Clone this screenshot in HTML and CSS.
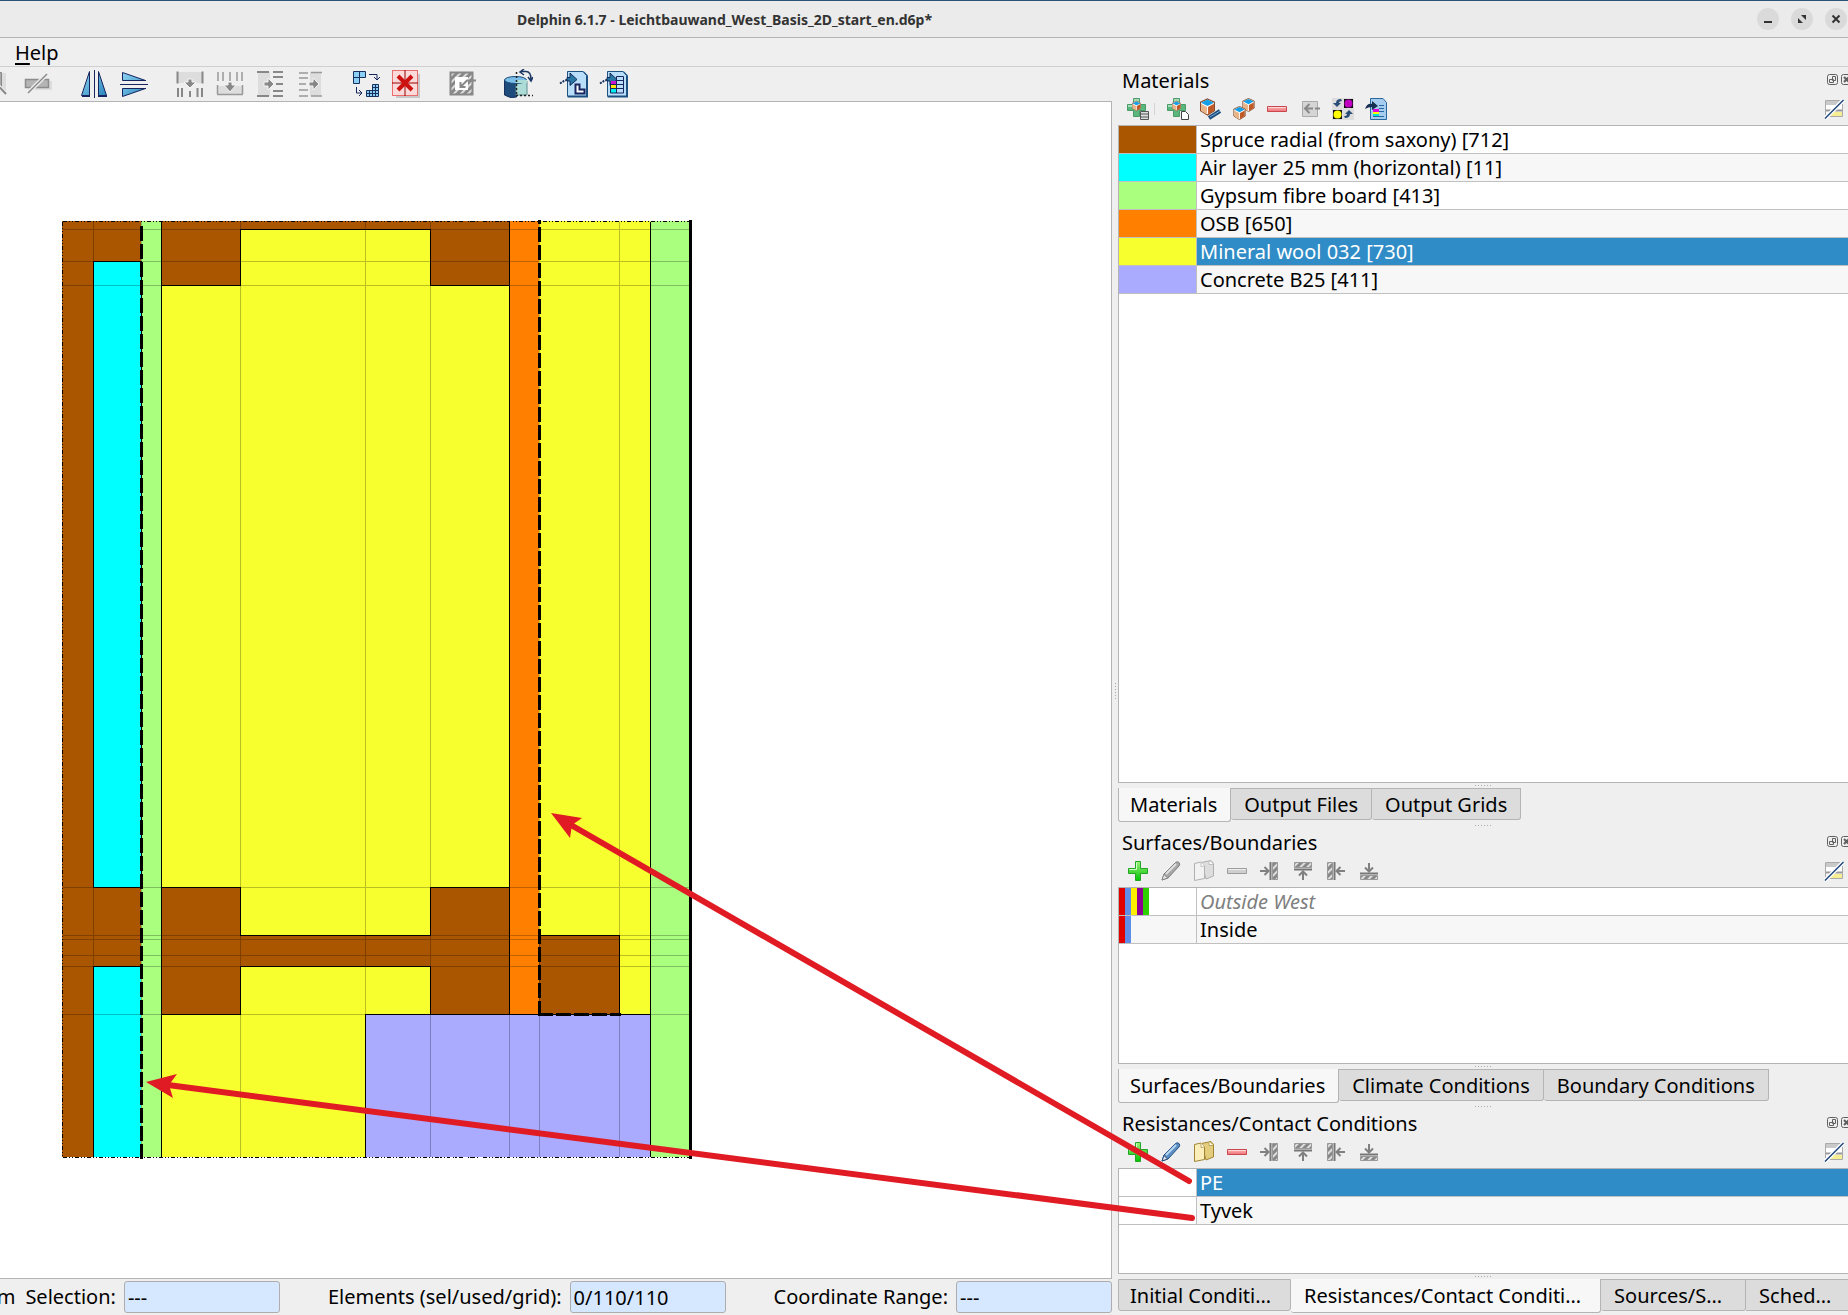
FILE: index.html
```html
<!DOCTYPE html>
<html lang="en">
<head>
<meta charset="utf-8">
<title>Delphin 6.1.7</title>
<link rel="stylesheet" href="styles.css">
</head>
<body>
<svg class="defs" aria-hidden="true">
  <defs>
    <linearGradient id="gBlue" x1="0" y1="0" x2="1" y2="1"><stop offset="0" stop-color="#8fd4f2"/><stop offset="1" stop-color="#2a86bd"/></linearGradient>
    <linearGradient id="gGreen" x1="0" y1="0" x2="0" y2="1"><stop offset="0" stop-color="#9cf07c"/><stop offset="1" stop-color="#00c400"/></linearGradient>
    <linearGradient id="gRed" x1="0" y1="0" x2="0" y2="1"><stop offset="0" stop-color="#ffb9b9"/><stop offset="1" stop-color="#ee7076"/></linearGradient>
    <pattern id="hatch" width="5" height="5" patternUnits="userSpaceOnUse" patternTransform="rotate(45)"><rect width="5" height="5" fill="#888"/><rect width="2" height="5" fill="#ddd"/></pattern>
    <symbol id="cube" viewBox="0 0 14 16">
      <path d="M7 .5 13.500 3.500V11.500L7 15.500.5 11.500V3.500z" fill="#fff" stroke="#8a4a2a"/>
      <path d="M7 1 13 4 7 7 1 4z" fill="#159fe8"/><path d="M1 5 6.500 8V15L1 11.500z" fill="#e8b488"/><path d="M13 5 7.500 8V15L13 11.500z" fill="#bf5a26"/>
    </symbol>
    <symbol id="gplus" viewBox="0 0 22 22"><path d="M6.500.5h6v6h6v6h-6v6h-6v-6h-6v-6h6z" fill="#59b77d" stroke="#4b9b69"/><path d="M7 1h5v3H7zM1 7h5v2H1z" fill="#a8dcb9"/></symbol>
    <symbol id="plus" viewBox="0 0 22 22"><path d="M8.500 1.500h5v7h7v5h-7v7h-5v-7h-7v-5h7z" fill="url(#gGreen)" stroke="#22a522"/><path d="M9.500 9.500v-7M2.500 9.500h7" stroke="#d4ffc4" fill="none"/></symbol>
    <symbol id="minus" viewBox="0 0 22 22"><path d="M1.500 8.500h19v5h-19z" fill="url(#gRed)" stroke="#c8474f"/><path d="M2 9.500h18" stroke="#ffd6d6"/></symbol>
    <symbol id="minusoff" viewBox="0 0 22 22"><path d="M1.500 8.500h19v5h-19z" fill="#cfcfcf" stroke="#9c9c9c"/><path d="M2 9.500h18" stroke="#eee"/></symbol>
    <symbol id="pencil" viewBox="0 0 22 22"><path d="M2 20 4 14 15.500 2.500q2-1.500 3.500 0t0 3.500L8 18z" fill="#5b8fc4" stroke="#244f80"/><path d="M6 14 16 4" stroke="#b7d6f2" stroke-width="2"/><path d="M2 20 4 14.500 7.500 18z" fill="#e8e8e8" stroke="#244f80"/></symbol>
    <symbol id="penciloff" viewBox="0 0 22 22"><path d="M2 20 4 14 15.500 2.500q2-1.500 3.500 0t0 3.500L8 18z" fill="#a8a8a8" stroke="#7d7d7d"/><path d="M6 14 16 4" stroke="#e0e0e0" stroke-width="2"/><path d="M2 20 4 14.500 7.500 18z" fill="#eee" stroke="#888"/></symbol>
    <symbol id="copy" viewBox="0 0 22 22"><path d="M8.500 2.500 18 .5l2.500 3V16L13 19z" fill="#e3cd7c" stroke="#a18432"/><path d="M1.500 3.500 8 2l3.500 4v12.500l-10 2z" fill="#fbeebb" stroke="#a18432"/><path d="M8 2v4.500l3.500-.5M16 1v3.500h4" fill="#fff" stroke="#bda55a"/></symbol>
    <symbol id="copyoff" viewBox="0 0 22 22"><path d="M8.500 2.500 18 .5l2.500 3V16L13 19z" fill="#ddd" stroke="#b0b0b0"/><path d="M1.500 3.500 8 2l3.500 4v12.500l-10 2z" fill="#f2f2f2" stroke="#b0b0b0"/><path d="M8 2v4.500l3.500-.5M16 1v3.500h4" fill="#fff" stroke="#c0c0c0"/></symbol>
    <symbol id="aright" viewBox="0 0 22 22"><path d="M1 11h8M5.500 7 9.500 11 5.500 15" fill="none" stroke="#808080" stroke-width="2"/><path d="M11.500 2v18" stroke="#777" stroke-width="2"/><path d="M13.500 2.500h5v17h-5z" fill="url(#hatch)" stroke="#999"/></symbol>
    <symbol id="aup" viewBox="0 0 22 22"><path d="M11 20v-8M7 15.500 11 11.500 15 15.500" fill="none" stroke="#808080" stroke-width="2"/><path d="M2 9.500h18" stroke="#777" stroke-width="2"/><path d="M2.500 2.500h17v5h-17z" fill="url(#hatch)" stroke="#999"/></symbol>
    <symbol id="aleft" viewBox="0 0 22 22"><path d="M20 11h-8M15.500 7 11.500 11 15.500 15" fill="none" stroke="#808080" stroke-width="2"/><path d="M9.500 2v18" stroke="#777" stroke-width="2"/><path d="M2.500 2.500h5v17h-5z" fill="url(#hatch)" stroke="#999"/></symbol>
    <symbol id="adown" viewBox="0 0 22 22"><path d="M11 3v8M7 7.500 11 11.500 15 7.500" fill="none" stroke="#808080" stroke-width="2"/><path d="M2 13.500h18" stroke="#777" stroke-width="2"/><path d="M2.500 15.500h17v4h-17z" fill="url(#hatch)" stroke="#999"/></symbol>
    <symbol id="tableoff" viewBox="0 0 22 22"><path d="M2.500 2.500h17v16h-17z" fill="#fff" stroke="#aaa"/><path d="M3 3h16v4H3z" fill="#c9c9c9"/><path d="M3 12.500h16" stroke="#999" stroke-width="2"/><path d="M8 14h11v4H5z" fill="#f5ee92"/><path d="M2 20.500 20.500 2" stroke="#fff" stroke-width="4"/><path d="M2 20.500 20.500 2" stroke="#1d4478" stroke-width="1.500"/></symbol>
    <symbol id="float" viewBox="0 0 12 12"><rect x=".5" y=".5" width="10" height="10" rx="2" fill="none" stroke="#606060"/><path d="M5.500 2.500h3v4h-3zM2.500 5.500h4v3h-4z" fill="#eee" stroke="#606060"/></symbol>
    <symbol id="close" viewBox="0 0 12 12"><rect x=".5" y=".5" width="10" height="10" rx="2" fill="none" stroke="#606060"/><path d="M3 3l5 5M8 3 3 8" stroke="#606060" stroke-width="2"/></symbol>
    <symbol id="import" viewBox="0 0 30 28"><path d="M10 1.500h15l4 4v22H8.500V1.500z" fill="#1c4f82"/><path d="M8.500 1.500H24l3.500 4V26h-19z" fill="#b9defa" stroke="#1c5180"/><path d="M1 13.500 5 11l4-1.500" stroke="#17305e" stroke-width="2" stroke-dasharray="2 1" fill="none"/><path d="M8 7.500h3V3l7 6.500-7 6V11H8z" fill="#2878a6" stroke="#152b5b"/></symbol>
  </defs>
</svg>

<div class="window">
  <header class="titlebar">
    <h1>Delphin 6.1.7 - Leichtbauwand_West_Basis_2D_start_en.d6p*</h1>
    <div class="controls">
      <button aria-label="Minimize"><svg width="22" height="22"><path d="M7 14h8" stroke="#333" stroke-width="2"/></svg></button>
      <button aria-label="Restore"><svg width="22" height="22"><path d="M10 7h5v5zM7 10v5h5z" fill="#333"/></svg></button>
      <button aria-label="Close"><svg width="22" height="22"><path d="M7.500 7.500l7 7M14.500 7.500l-7 7" stroke="#333" stroke-width="2"/></svg></button>
    </div>
  </header>
  <nav class="menubar"><button><u>H</u>elp</button></nav>

  <div class="workspace">
    <main class="editor">
      <div class="toolbar">
        <button aria-label="Remove column"><svg width="28" height="28"><path d="M15 3h7v19h-7z" fill="#ddd"/><path d="M12.500 2.500h5v18h-5z" fill="#aaa" stroke="#888"/><path d="M6 7 22 24" stroke="#eee" stroke-width="4"/><path d="M6 7 22 24" stroke="#888" stroke-width="2"/></svg></button>
        <button aria-label="Remove row"><svg width="28" height="28"><path d="M4 11h24v9H4z" fill="#ddd"/><path d="M1.500 9.500h23v8h-23z" fill="#b5b5b5" stroke="#8c8c8c" stroke-width="1.500"/><path d="M4 23 23 4" stroke="#eee" stroke-width="4"/><path d="M4 23 23 4" stroke="#888" stroke-width="1.500"/></svg></button>
        <span class="sep"></span>
        <button aria-label="Mirror horizontally"><svg width="28" height="28"><path d="M9.500 1.500v24h-8zM18.500 1.500v24h8z" fill="url(#gBlue)" stroke="#17245e"/><path d="M2 26h8M18 26h9" stroke="#17245e" stroke-width="2"/><path d="M14.500 0v28" stroke="#17245e"/></svg></button>
        <button aria-label="Mirror vertically"><svg width="28" height="28"><path d="M2.500 2.500v8h23zM2.500 26.500v-8h23z" fill="url(#gBlue)" stroke="#17245e"/><path d="M0 14.500h28" stroke="#17245e"/><path d="M3 10.500h23M3 18.500h23" stroke="#17245e"/></svg></button>
        <span class="sep"></span>
        <button aria-label="Insert above"><svg width="28" height="28"><path d="M1 2h26v11H1z" fill="#ddd"/><path d="M1.500 1.500v12M26.500 1.500v12M2 18v9M6 18v9M14 21v6M21.500 18v9M26 18v9" stroke="#888" stroke-width="2"/><path d="M8 12h4V9h4v3h4l-6 6z" fill="#888" stroke="#f5f5f5"/></svg></button>
        <button aria-label="Insert below"><svg width="28" height="28"><path d="M1 16h26v9H1z" fill="#ddd"/><path d="M2 2v9M7 2v9M14 2v9M21 2v9M26 2v9M1.500 15v9M26.500 15v9M1 24.500h26" stroke="#999" stroke-width="1.500"/><path d="M8 15h4v-3h4v3h4l-6 7z" fill="#888" stroke="#f5f5f5"/></svg></button>
        <button aria-label="Insert left"><svg width="28" height="28"><path d="M2 2h12v24H2z" fill="#ddd"/><path d="M1 2h12M1 26h12M17 2h10M17 7h10M20 14h7M17 21h10M17 26h10" stroke="#888" stroke-width="2"/><path d="M8 12h4V8l6 6-6 6v-4H8z" fill="#888" stroke="#f5f5f5"/></svg></button>
        <button aria-label="Insert right"><svg width="28" height="28"><path d="M14 2h11v24H14z" fill="#ddd"/><path d="M3 3h9M3 8h9M3 14h7M3 20h9M3 26h9M15 2.500h11M15 26h11" stroke="#999" stroke-width="1.500"/><path d="M13 12h4V8l6 6-6 6v-4h-4z" fill="#888" stroke="#f5f5f5"/></svg></button>
        <span class="sep"></span>
        <button aria-label="Refine grid"><svg width="28" height="28"><path d="M1.500 1.500h12v6h-6v6h-6zM7.500 1.500v6h-6" fill="#8bd0f4" stroke="#17305e"/><path d="M20.500 14.500h6v12h-12v-6h6zM17.500 20v6M20.500 20v6M23.500 14v12M14 23.500h12M20 17.500h6M20 20.500h6" fill="#8bd0f4" stroke="#17305e"/><path d="M17 4.500h8v5M22 7l3 3 3-3M4.500 17v6h5M7 20l3 3-3 3" fill="none" stroke="#17245e"/></svg></button>
        <button aria-label="Clear assignment"><svg width="28" height="28"><path d="M4 4h24v24H4z" fill="#c8c8c8"/><path d="M0 0h26v26H0z" fill="#fbdada"/><rect x=".5" y=".5" width="25" height="25" fill="none" stroke="#d00" stroke-dasharray="1 1"/><path d="M13 0v26M0 13h26" stroke="#900"/><path d="M6 6l14 14M20 6 6 20" stroke="#c11" stroke-width="4"/></svg></button>
        <span class="sep"></span>
        <button aria-label="Fill selection"><svg width="28" height="28"><path d="M2.500 2.500h22v22h-22z" fill="url(#hatch)" stroke="#888" stroke-width="2"/><path d="M7 7h13v13H7z" fill="#fff"/><path d="M28 10.500h-9l-6 6M12.500 12v5h5" fill="none" stroke="#888" stroke-width="2"/></svg></button>
        <span class="sep"></span>
        <button aria-label="Rotate construction"><svg width="30" height="30" viewBox="0 0 30 30"><path d="M1.500 11v15q6 4 12 2V14z" fill="#1f4a7c" stroke="#17305e"/><path d="M13 12h11v14H13z" fill="#acdcd5" stroke="#5d8f94"/><ellipse cx="12.500" cy="11" rx="11" ry="3.500" fill="#7cbfe8" stroke="#1b4b79"/><path d="M13 11h11v3H13z" fill="#acdcd5"/><path d="M13.500 3v24M13 26.500h17" stroke="#222" stroke-width="1.500" stroke-dasharray="2 2"/><path d="M18 2.500h5q5 0 5 8M21 0l-4 3 4 3M25 8l3 4 2-4" fill="none" stroke="#1b3864" stroke-width="1.500"/></svg></button>
        <span class="sep"></span>
        <button aria-label="Import geometry"><svg width="30" height="28"><use href="#import"/><path d="M16.500 14.500h4v5h5v4h-9z" fill="#fff" stroke="#17245e" stroke-width="2"/></svg></button>
        <button aria-label="Import materials"><svg width="30" height="28"><use href="#import"/><path d="M12 11h6v4h-6z" fill="#d010d0"/><path d="M12 15h6v4h-6z" fill="#ffe800"/><path d="M12 19h6v4h-6z" fill="#00f0f0"/><path d="M11.500 14.500h13M11.500 18.500h13M17.500 10.500h7M11.500 13v10h13V6.500h-7V23" fill="none" stroke="#17245e"/></svg></button>
      </div>

      <div class="canvas">
        <svg class="construction" viewBox="60 218 634 943" width="634" height="943" role="img" aria-label="Construction cross section" shape-rendering="crispEdges">
          <path fill="#a50" d="M62 221H690V1157H62z"/>
          <path fill="#0ff" d="M93 261h48v626H93zM93 966h48v191H93z"/>
          <path fill="#aaff7f" d="M141 221h20v936h-20zM650 221h40v936h-40z"/>
          <path fill="#f8ff2e" d="M161 285H240V229H430V285H509V887H430V935H240V887H161zM161 1014H240V966H430V1014H365V1157H161zM539 221H650V1014H619V935H539z"/>
          <path fill="#ff8000" d="M509 221h30v793h-30z"/>
          <path fill="#aaf" d="M365 1014h285v143H365z"/>
          <path class="grid" d="M93.500 222V1157M141.500 222V1157M161.500 222V1157M240.500 222V1157M365.500 222V1157M430.500 222V1157M509.500 222V1157M539.500 222V1157M619.500 222V1157M650.500 222V1157M63 229.500H690M63 261.500H690M63 285.500H690M63 887.500H690M63 935.500H690M63 939.500H690M63 955.500H690M63 966.500H690M63 1014.500H690"/>
          <path class="edge" d="M93.500 261.500H141V887.500H93.500zM141 966.500H93.500V1157M161.500 222V1157M161.500 285.500H240.500V229.500H430.500V285.500H509.500M161.500 887.500H240.500V935.500H430.500V887.500H509.500M161.500 1014.500H240.500V966.500H430.500V1014.500M365.500 1157V1014.500H650.500M509.500 222V1014.500M539.500 935.500H619.500V1014.500M650.500 222V1157"/>
          <path class="outline" d="M62.500 221.500H690M62.500 221.500V1157.500M62.500 1157.500H690"/>
          <path class="contact" d="M141.500 1159V226M539.500 1016V220M538 1014.500H621"/>
          <path class="surface" d="M690.500 220V1159"/>
        </svg>
      </div>

      <footer class="statusbar">
        <span class="unit">m</span>
        <label>Selection: <input readonly value="---"></label>
        <label>Elements (sel/used/grid): <input readonly value="0/110/110"></label>
        <label>Coordinate Range: <input readonly value="---"></label>
      </footer>
    </main>

    <div class="splitter"></div>

    <aside class="docks">
      <section class="dock materials">
        <div class="docktitle"><h2>Materials</h2><button aria-label="Float"><svg width="12" height="12"><use href="#float"/></svg></button><button aria-label="Close"><svg width="12" height="12"><use href="#close"/></svg></button></div>
        <div class="tools">
          <button aria-label="Add from database"><svg width="22" height="22"><use href="#gplus"/><use href="#cube" x="5" y="2" width="9" height="12"/><path d="M13.500 13.500h8v8h-8zM13 16h9M13 19h9" fill="#ddd" stroke="#555"/></svg></button>
          <span class="sep"></span>
          <button aria-label="Add new"><svg width="22" height="22"><use href="#gplus"/><use href="#cube" x="5" y="2" width="9" height="12"/><path d="M14.500 13.500h4l3 3v5h-7z" fill="#fff" stroke="#444"/></svg></button>
          <button aria-label="Edit material"><svg width="22" height="22"><use href="#cube" x="0" y="0" width="15" height="18"/><path d="M9 20 20 13" stroke="#1d4a78" stroke-width="4"/><path d="M10 19 20 13" stroke="#78afe2"/></svg></button>
          <button aria-label="Copy material"><svg width="22" height="22"><use href="#cube" x="9" y="0" width="13" height="14"/><use href="#cube" x="0" y="8" width="13" height="14"/></svg></button>
          <button aria-label="Remove"><svg width="22" height="22"><use href="#minus"/></svg></button>
          <button aria-label="Assign"><svg width="22" height="22"><path d="M3.500 3.500h15v15h-15z" fill="#d5d5d5" stroke="#aaa"/><path d="M21 10.500h-5M14 10.500H6M10.500 6 6 10.500 10.500 15" stroke="#888" stroke-width="2" fill="none"/></svg></button>
          <button aria-label="Replace"><svg width="22" height="22"><path d="M0 0h22v22H0z" fill="#ddd"/><path d="M12 1h9v9h-9zM1 12h9v9H1z" fill="#111"/><circle cx="16.500" cy="5.500" r="4" fill="#c000c0"/><circle cx="5.500" cy="16.500" r="4" fill="#ff0"/><path d="M9 1Q4 1 4 5H1l4 4 4-4H7q0-2 3-2zM13 20q5 0 5-4h3l-4-4-4 4h2q0 2-3 2z" fill="#294d76"/></svg></button>
          <button aria-label="Import"><svg width="22" height="22"><path d="M5.500.5H18l3.500 4v17h-16z" fill="#a6cdef" stroke="#27689e"/><path d="M8 11h6v3H8z" fill="#d0d"/><path d="M8 14h6v2H8z" fill="#ff0"/><path d="M8 16h6v2H8z" fill="#0dd"/><path d="M14 7.500h5M14 10.500h5M14 13.500h5M8 18.500h11" stroke="#27689e"/><path d="M0 11Q2 5 7 6V3l6 5-6 4V9Q3 9 0 11z" fill="#152f52"/></svg></button>
          <button class="end" aria-label="Table view"><svg width="22" height="22"><use href="#tableoff"/></svg></button>
        </div>
        <div class="list">
          <table>
            <tr><td class="swatch" style="background:#aa5500"></td><td>Spruce radial (from saxony) [712]</td></tr>
            <tr><td class="swatch" style="background:#00ffff"></td><td>Air layer 25 mm (horizontal) [11]</td></tr>
            <tr><td class="swatch" style="background:#aaff7f"></td><td>Gypsum fibre board [413]</td></tr>
            <tr><td class="swatch" style="background:#ff8000"></td><td>OSB [650]</td></tr>
            <tr class="selected"><td class="swatch" style="background:#f8ff2e"></td><td>Mineral wool 032 [730]</td></tr>
            <tr><td class="swatch" style="background:#aaaaff"></td><td>Concrete B25 [411]</td></tr>
          </table>
        </div>
        <div class="grip"></div>
        <div class="tabs" role="tablist">
          <button role="tab" aria-selected="true">Materials</button><button role="tab" aria-selected="false">Output Files</button><button role="tab" aria-selected="false">Output Grids</button>
        </div>
      </section>

      <div class="grip between"></div>

      <section class="dock surfaces">
        <div class="docktitle"><h2>Surfaces/Boundaries</h2><button aria-label="Float"><svg width="12" height="12"><use href="#float"/></svg></button><button aria-label="Close"><svg width="12" height="12"><use href="#close"/></svg></button></div>
        <div class="tools">
          <button aria-label="Add"><svg width="22" height="22"><use href="#plus"/></svg></button>
          <button aria-label="Edit"><svg width="22" height="22"><use href="#penciloff"/></svg></button>
          <button aria-label="Copy"><svg width="22" height="22"><use href="#copyoff"/></svg></button>
          <button aria-label="Remove"><svg width="22" height="22"><use href="#minusoff"/></svg></button>
          <button aria-label="Assign left"><svg width="22" height="22"><use href="#aright"/></svg></button>
          <button aria-label="Assign bottom"><svg width="22" height="22"><use href="#aup"/></svg></button>
          <button aria-label="Assign right"><svg width="22" height="22"><use href="#aleft"/></svg></button>
          <button aria-label="Assign top"><svg width="22" height="22"><use href="#adown"/></svg></button>
          <button class="end" aria-label="Table view"><svg width="22" height="22"><use href="#tableoff"/></svg></button>
        </div>
        <div class="list">
          <table>
            <tr><td class="swatch"><div class="stripes"><i class="red"></i><i class="blue"></i><i class="yellow"></i><i class="purple"></i><i class="green"></i></div></td><td class="unused">Outside West</td></tr>
            <tr><td class="swatch"><div class="stripes"><i class="red"></i><i class="blue"></i></div></td><td>Inside</td></tr>
          </table>
        </div>
        <div class="grip"></div>
        <div class="tabs" role="tablist">
          <button role="tab" aria-selected="true">Surfaces/Boundaries</button><button role="tab" aria-selected="false">Climate Conditions</button><button role="tab" aria-selected="false">Boundary Conditions</button>
        </div>
      </section>

      <div class="grip between"></div>

      <section class="dock resistances">
        <div class="docktitle"><h2>Resistances/Contact Conditions</h2><button aria-label="Float"><svg width="12" height="12"><use href="#float"/></svg></button><button aria-label="Close"><svg width="12" height="12"><use href="#close"/></svg></button></div>
        <div class="tools">
          <button aria-label="Add"><svg width="22" height="22"><use href="#plus"/></svg></button>
          <button aria-label="Edit"><svg width="22" height="22"><use href="#pencil"/></svg></button>
          <button aria-label="Copy"><svg width="22" height="22"><use href="#copy"/></svg></button>
          <button aria-label="Remove"><svg width="22" height="22"><use href="#minus"/></svg></button>
          <button aria-label="Assign left"><svg width="22" height="22"><use href="#aright"/></svg></button>
          <button aria-label="Assign bottom"><svg width="22" height="22"><use href="#aup"/></svg></button>
          <button aria-label="Assign right"><svg width="22" height="22"><use href="#aleft"/></svg></button>
          <button aria-label="Assign top"><svg width="22" height="22"><use href="#adown"/></svg></button>
          <button class="end" aria-label="Table view"><svg width="22" height="22"><use href="#tableoff"/></svg></button>
        </div>
        <div class="list">
          <table>
            <tr class="selected"><td class="swatch"></td><td>PE</td></tr>
            <tr><td class="swatch" style="background:#ffffff"></td><td>Tyvek</td></tr>
          </table>
        </div>
        <div class="grip"></div>
        <div class="tabs filled" role="tablist">
          <button role="tab" aria-selected="false">Initial Conditi…</button><button role="tab" aria-selected="true">Resistances/Contact Conditi…</button><button role="tab" aria-selected="false">Sources/S…</button><button role="tab" aria-selected="false">Sched…</button>
        </div>
      </section>
    </aside>
  </div>

  <svg class="annotations" viewBox="0 0 1848 1315" width="1848" height="1315" aria-hidden="true">
    <path d="M571 825 1189 1181M168 1085 1192 1218" stroke="#e01b24" stroke-width="6" stroke-linecap="round"/>
    <path d="M551 813 582 818 572 825 570 838zM146 1082 177 1074 169 1085 173 1098z" fill="#e01b24"/>
  </svg>
</div>
</body>
</html>
```
FILE: styles.css
```css
* { box-sizing: border-box; }

body {
  margin: 0;
  background: #efefef;
  color: #000;
  font: 20px/24px "Noto Sans", "Open Sans", sans-serif;
  overflow: hidden;
}

button {
  margin: 0;
  padding: 0;
  border: 0;
  background: none;
  color: inherit;
  font: inherit;
}

svg { display: block; }
.defs { position: absolute; width: 0; height: 0; }

.window {
  position: relative;
  display: flex;
  flex-direction: column;
  height: 100vh;
}

.titlebar {
  display: flex;
  align-items: center;
  height: 38px;
  padding-right: 1px;
  border-top: 1px solid #2b5378;
  border-bottom: 1px solid #b4b4b4;
  background: #ebebeb;
}
.titlebar h1 {
  flex: 1;
  margin: 0;
  padding-top: 2px;
  padding-right: 825px;
  color: #333;
  font-size: 14px;
  font-weight: 700;
  text-align: right;
  white-space: nowrap;
}
.controls { display: flex; gap: 12px; }
.controls button { width: 22px; height: 22px; border-radius: 50%; background: #dadada; }

.menubar {
  height: 29px;
  padding-left: 15px;
  border-bottom: 1px solid #d0d0d0;
}
.menubar button { line-height: 30px; }
.menubar u { text-decoration-thickness: 2px; text-underline-offset: 3px; }

.workspace {
  flex: 1;
  min-height: 0;
  display: grid;
  grid-template-columns: minmax(0, 1fr) 6px 730px;
}

.splitter {
  align-self: center;
  justify-self: center;
  width: 1px;
  height: 17px;
  background: repeating-linear-gradient(#aaa 0 1px, transparent 1px 3px);
}

.editor { display: flex; flex-direction: column; min-width: 0; min-height: 0; }

.toolbar {
  display: flex;
  align-items: center;
  height: 34px;
  margin-left: -22px;
}
.toolbar button { display: grid; place-items: center; width: 40px; height: 34px; }
.toolbar .sep { width: 16px; }

.canvas {
  flex: 1;
  min-height: 0;
  padding: 116px 0 0 60px;
  border: solid #b4b4b4;
  border-width: 1px 1px 1px 0;
  background: #fff;
  overflow: hidden;
}
.construction path { stroke-width: 1; }
.construction .grid { fill: none; stroke: #000; stroke-opacity: .25; }
.construction .edge { fill: none; stroke: #000; }
.construction .outline { fill: none; stroke: #000; stroke-dasharray: 4 2 1 2 1 2; }
.construction .contact { fill: none; stroke: #000; stroke-width: 3; stroke-dasharray: 15 3; }
.construction .surface { fill: none; stroke: #000; stroke-width: 3; }

.statusbar {
  display: flex;
  justify-content: flex-end;
  align-items: center;
  gap: 48px;
  height: 36px;
  white-space: nowrap;
}
.statusbar .unit { margin-right: -38px; }
.statusbar label { display: flex; align-items: center; gap: 8px; }
.statusbar input {
  width: 156px;
  height: 32px;
  padding: 0 3px;
  border: 1px solid #adadad;
  border-radius: 3px;
  background: #d6e8ff;
  color: #000;
  font: inherit;
}

.docks {
  display: flex;
  flex-direction: column;
  min-width: 0;
  min-height: 0;
  padding-bottom: 2px;
  overflow: hidden;
}
.dock { display: flex; flex-direction: column; min-height: 0; }
.materials { flex: 1; }
.surfaces { height: 274px; }
.resistances { height: 203px; }

.grip {
  flex: none;
  height: 5px;
  background: repeating-linear-gradient(90deg, #aaa 0 1px, transparent 1px 3px) 50% 50% / 17px 1px no-repeat;
}
.grip.between { height: 7px; }

.docktitle {
  display: flex;
  align-items: center;
  gap: 2px;
  height: 26px;
  margin-right: -5px;
  padding-left: 4px;
}
.docktitle h2 { flex: 1; margin: 0; padding-top: 2px; font-size: 20px; font-weight: 400; line-height: 26px; }

.tools { display: flex; align-items: center; height: 32px; padding-left: 3px; }
.tools button { display: grid; place-items: center; width: 33px; height: 32px; }
.tools .sep { width: 7px; height: 12px; border-left: 1px solid #d4d4d4; }
.tools .end { width: 28px; margin-left: auto; }

.list {
  flex: 1;
  min-height: 0;
  border: 1px solid #b4b4b4;
  border-right: 0;
  background: #fff;
  overflow: hidden;
}
.list table { width: 100%; border-spacing: 0; table-layout: fixed; }
.list td {
  height: 28px;
  padding: 0 0 0 3px;
  border-bottom: 1px solid #c0c0c0;
  line-height: 24px;
  white-space: nowrap;
}
.list tr:nth-child(even) td { background: #f7f7f7; }
.list .swatch { width: 78px; padding: 0; border-right: 1px solid #c0c0c0; }
.list tr.selected td:last-child { background: #308cc6; color: #fff; }
.list .unused { color: #808080; font-style: italic; }
.stripes { display: flex; height: 27px; }
.stripes i { width: 6px; }
.red { background: #e00000; }
.blue { background: #5e8eea; }
.yellow { background: #ffee00; }
.purple { background: #8e0094; }
.green { background: #2fd000; }

.tabs { display: flex; align-items: flex-start; height: 34px; white-space: nowrap; }
.tabs button {
  height: 32px;
  padding: 1px 13px 0;
  border: 1px solid #b4b4b4;
  border-left: 0;
  border-radius: 0 0 3px 3px;
  background: #dcdcdc;
}
.tabs button:first-child { padding-left: 11px; border-left: 1px solid #b4b4b4; }
.tabs button[aria-selected="true"] { height: 34px; border-top: 0; background: #f7f7f7; }
.tabs.filled button { padding-right: 19px; text-align: left; }
.tabs.filled button:nth-child(n+3) { padding-right: 23px; }
.tabs.filled button:last-child { flex: 1; border-right: 0; border-radius: 0; }

.annotations { position: absolute; top: 0; left: 0; pointer-events: none; }
```
